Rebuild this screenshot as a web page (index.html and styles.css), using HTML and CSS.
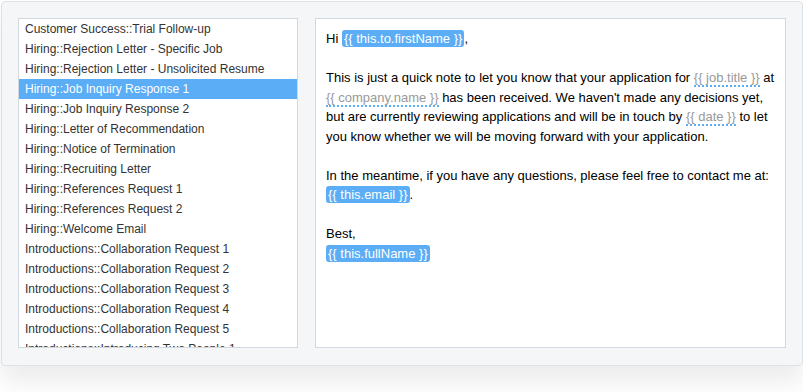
FILE: index.html
```html
<!DOCTYPE html>
<html lang="en">
<head>
  <meta charset="UTF-8">
  <title>Templates</title>
  <link rel="stylesheet" href="styles.css">
</head>
<body>
  <div class="panel">
    <ul class="template-list">
      <li>Customer Success::Trial Follow-up</li>
      <li>Hiring::Rejection Letter - Specific Job</li>
      <li>Hiring::Rejection Letter - Unsolicited Resume</li>
      <li class="selected">Hiring::Job Inquiry Response 1</li>
      <li>Hiring::Job Inquiry Response 2</li>
      <li>Hiring::Letter of Recommendation</li>
      <li>Hiring::Notice of Termination</li>
      <li>Hiring::Recruiting Letter</li>
      <li>Hiring::References Request 1</li>
      <li>Hiring::References Request 2</li>
      <li>Hiring::Welcome Email</li>
      <li>Introductions::Collaboration Request 1</li>
      <li>Introductions::Collaboration Request 2</li>
      <li>Introductions::Collaboration Request 3</li>
      <li>Introductions::Collaboration Request 4</li>
      <li>Introductions::Collaboration Request 5</li>
      <li>Introductions::Introducing Two People 1</li>
      <li>Introductions::Introducing Two People 2</li>
    </ul>
    <div class="preview">
      <p>Hi <span class="token">{{ this.to.firstName }}</span>,</p>
      <p>This is just a quick note to let you know that your application for <span class="field">{{ job.title }}</span> at <span class="field">{{ company.name }}</span> has been received. We haven't made any decisions yet, but are currently reviewing applications and will be in touch by <span class="field">{{ date }}</span> to let you know whether we will be moving forward with your application.</p>
      <p>In the meantime, if you have any questions, please feel free to contact me at: <span class="token">{{ this.email }}</span>.</p>
      <p>Best,<br><span class="token">{{ this.fullName }}</span></p>
    </div>
  </div>
</body>
</html>
```
FILE: styles.css
```css
html, body {
  height: 100%;
}
body {
  margin: 0;
  background: #fff;
  font-family: "Liberation Sans", Arial, sans-serif;
  font-size: 13px;
}
.panel {
  display: flex;
  gap: 17px;
  width: 802px;
  height: 365px;
  box-sizing: border-box;
  margin: 1px 0 0 1px;
  padding: 16px 16px 17px 16px;
  background: #f5f6f8;
  border: 1px solid #dde1e8;
  border-radius: 4px;
  box-shadow: 0 16px 24px rgba(0, 0, 0, 0.08);
}
.template-list {
  width: 280px;
  flex-shrink: 0;
  margin: 0;
  padding: 0;
  list-style: none;
  background: #fff;
  border: 1px solid #d3d7e0;
  box-sizing: border-box;
  overflow: hidden;
  color: #333;
  font-size: 12px;
}
.template-list li {
  height: 20px;
  line-height: 20px;
  padding-left: 6px;
  white-space: nowrap;
}
.template-list li.selected {
  background: #5badf5;
  color: #fff;
}
.preview {
  width: 471px;
  box-sizing: border-box;
  padding: 10px;
  background: #fff;
  border: 1px solid #d3d7e0;
  color: #000;
  line-height: 19.5px;
}
.preview p {
  margin: 0 0 19.5px 0;
}
.token {
  background: #5badf5;
  color: #fff;
  border-radius: 3px;
  padding: 1px 2px;
}
.field {
  color: #999;
  border-bottom: 2px dotted #5badf5;
}
```
